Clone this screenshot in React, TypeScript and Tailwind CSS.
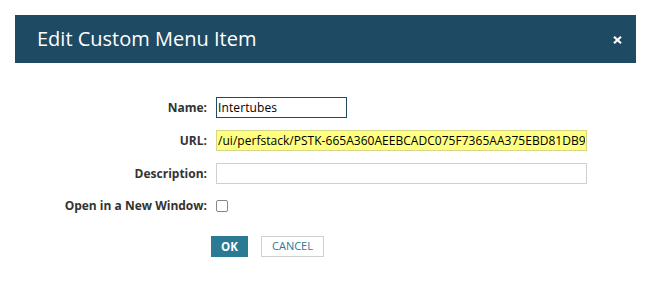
import React from 'react';

export default function App() {
  return (
    <div className="w-[650px] h-[283px] bg-white pt-[15px] px-[15px] font-['Open_Sans',sans-serif]">
      <div className="w-[621px]">
        <div className="h-[48px] bg-[#1f4a63] flex items-center justify-between pl-[22px] pr-[14px]">
          <h2 className="text-[20px] text-white leading-none">Edit Custom Menu Item</h2>
          <svg width="9" height="8" viewBox="0 0 9 8" className="mt-[1px]">
            <path d="M1 0.8 L8 7.2 M8 0.8 L1 7.2" stroke="white" strokeWidth="2.2" strokeLinecap="butt" />
          </svg>
        </div>
        <div className="pt-[34px]">
          <div className="grid grid-cols-[192px_1fr] gap-x-[9px] items-center text-[12px] text-[#333]">
            <label className="text-right font-bold">Name:</label>
            <input
              defaultValue="Intertubes"
              className="w-[131px] h-[21px] border border-[#1f4a63] px-[1px] text-[12px] tracking-[0.1px] text-black outline-none"
            />
            <label className="text-right font-bold mt-[12px]">URL:</label>
            <input
              defaultValue="/ui/perfstack/PSTK-665A360AEEBCADC075F7365AA375EBD81DB9"
              className="mt-[12px] w-[371px] h-[21px] border border-[#d6d68a] bg-[#ffff80] px-[1px] text-[12px] tracking-[0.03px] text-black outline-none"
            />
            <label className="text-right font-bold mt-[12px]">Description:</label>
            <input className="mt-[12px] w-[371px] h-[21px] border border-[#d0d0d0] px-[2px] text-[12px] outline-none" />
            <label className="text-right font-bold mt-[13px]">Open in a New Window:</label>
            <div className="mt-[13px] flex">
              <span className="w-[12px] h-[12px] border border-[#888] rounded-[2px] bg-white" />
            </div>
          </div>
          <div className="flex gap-[13px] pl-[196px] mt-[21px]">
            <button className="w-[37px] h-[21px] bg-[#2a7a94] text-white text-[11.5px] font-bold">OK</button>
            <button className="w-[63px] h-[21px] border border-[#d0d0d0] text-[#2a7a94] text-[11px]">CANCEL</button>
          </div>
        </div>
      </div>
    </div>
  );
}
